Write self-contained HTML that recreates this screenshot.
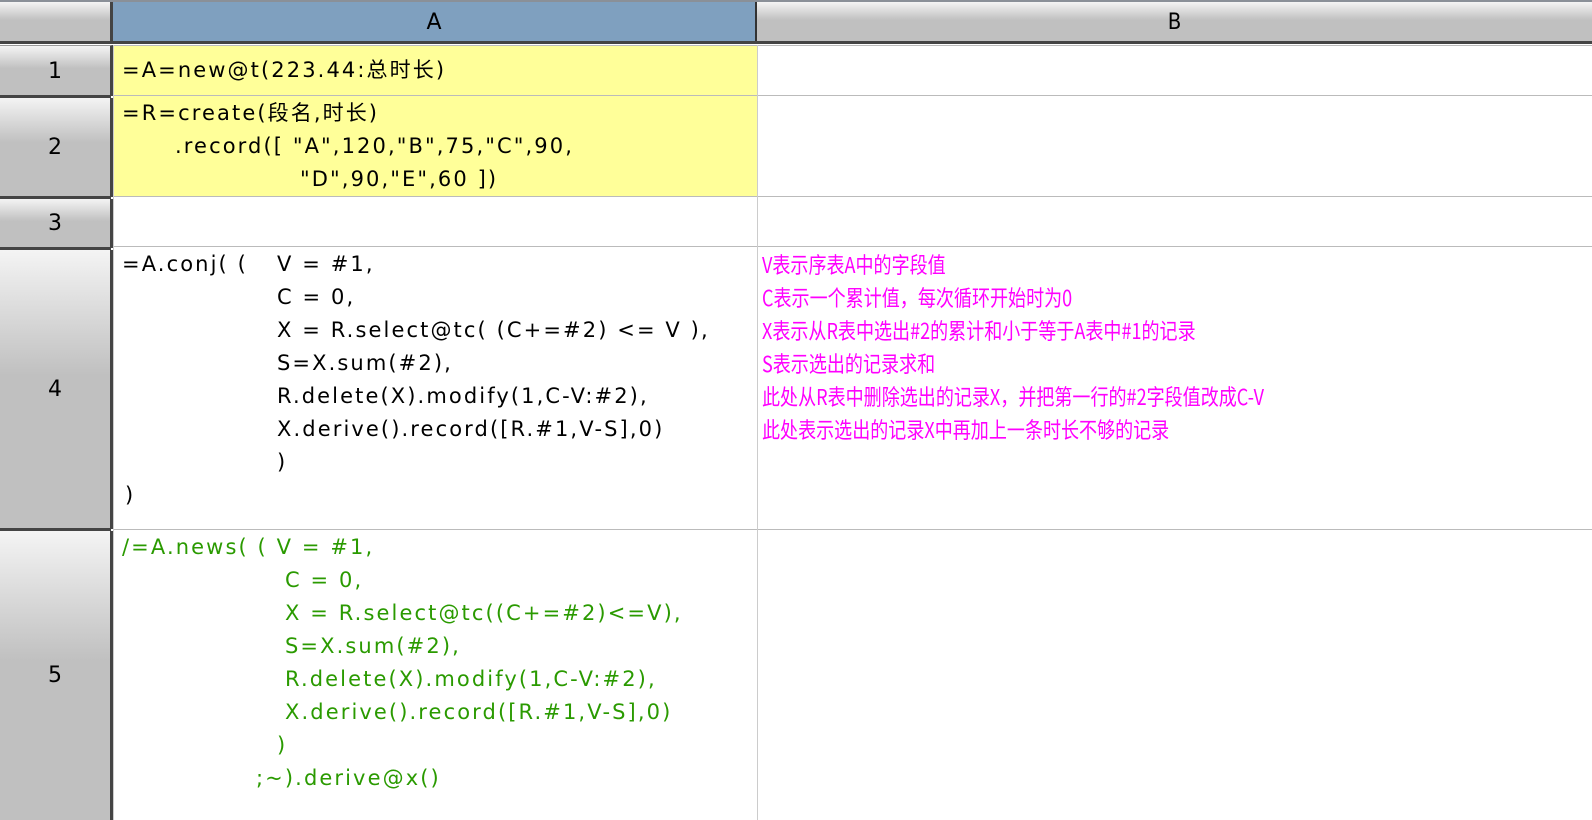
<!DOCTYPE html>
<html><head><meta charset="utf-8"><style>
html,body{margin:0;padding:0;width:1592px;height:820px;overflow:hidden;background:#fff;position:relative;font-family:"Liberation Sans","Noto Sans CJK SC",sans-serif;}
.a{position:absolute;box-sizing:border-box;}
.rh{background:linear-gradient(#f4f4f4,#c0c0c0 45%,#c0c0c0);border-right:3px solid #444;color:#000;font-size:22px;display:flex;align-items:center;justify-content:center;font-family:"DejaVu Sans",sans-serif;}
.hl{background:#444;height:3px;}
.t{position:absolute;font-family:"DejaVu Sans","Noto Sans CJK SC",sans-serif;font-size:21px;letter-spacing:2.1px;white-space:pre;line-height:33px;}
.g{color:#2a9a00}
.m{color:#f0f;font-family:"Noto Sans CJK SC",sans-serif;font-size:22px;letter-spacing:0;transform:scaleX(0.82);transform-origin:left top;}
</style></head><body>
<div class="a" style="left:0;top:0;width:1592px;height:2px;background:#8a9098"></div>
<div class="a rh" style="left:0;top:2px;width:113px;height:40px;border-right:3px solid #444"></div>
<div class="a" style="left:113px;top:2px;width:644px;height:40px;background:#7fa0bf;border-right:2px solid #333;display:flex;align-items:center;justify-content:center;font-size:22px;font-family:'DejaVu Sans',sans-serif">A</div>
<div class="a" style="left:757px;top:2px;width:835px;height:40px;background:linear-gradient(#f4f4f4,#c0c0c0 45%,#c0c0c0);display:flex;align-items:center;justify-content:center;font-size:22px;font-family:'DejaVu Sans Condensed','DejaVu Sans',sans-serif">B</div>
<div class="a hl" style="left:0;top:41px;width:1592px"></div>
<div class="a rh" style="left:0;top:45px;width:113px;height:51px;border-top:1px solid #999">1</div>
<div class="a hl" style="left:0;top:95px;width:111px"></div>
<div class="a rh" style="left:0;top:98px;width:113px;height:99px">2</div>
<div class="a hl" style="left:0;top:196px;width:111px"></div>
<div class="a rh" style="left:0;top:199px;width:113px;height:49px">3</div>
<div class="a hl" style="left:0;top:247px;width:111px"></div>
<div class="a rh" style="left:0;top:250px;width:113px;height:279px">4</div>
<div class="a hl" style="left:0;top:528px;width:111px"></div>
<div class="a rh" style="left:0;top:531px;width:113px;height:289px">5</div>
<div class="a" style="left:114px;top:45px;width:643px;height:151px;background:#ffff99"></div>
<div class="a" style="left:114px;top:95px;width:1478px;height:1px;background:#bbb"></div>
<div class="a" style="left:114px;top:45px;width:1478px;height:1px;background:#bbb"></div>
<div class="a" style="left:114px;top:196px;width:1478px;height:1px;background:#bbb"></div>
<div class="a" style="left:114px;top:246px;width:1478px;height:1px;background:#bbb"></div>
<div class="a" style="left:114px;top:529px;width:1478px;height:1px;background:#bbb"></div>
<div class="a" style="left:757px;top:45px;width:1px;height:775px;background:#ccc"></div>
<div class="a" style="left:113px;top:45px;width:1px;height:775px;background:#ccc"></div>
<div class="t" style="left:122px;top:54px">=A=new@t(223.44:总时长)</div>
<div class="t" style="left:122px;top:97px">=R=create(段名,时长)</div>
<div class="t" style="left:175px;top:130px">.record([ "A",120,"B",75,"C",90,</div>
<div class="t" style="left:300px;top:163px">"D",90,"E",60 ])</div>
<div class="t" style="left:122px;top:248px">=A.conj( (</div>
<div class="t" style="left:277px;top:248px">V = #1,
C = 0,
X = R.select@tc( (C+=#2) &lt;= V ),
S=X.sum(#2),
R.delete(X).modify(1,C-V:#2),
X.derive().record([R.#1,V-S],0)
)</div>
<div class="t" style="left:125px;top:479px">)</div>
<div class="t m" style="left:762px;top:248px">V表示序表A中的字段值
C表示一个累计值，每次循环开始时为0
X表示从R表中选出#2的累计和小于等于A表中#1的记录
S表示选出的记录求和
此处从R表中删除选出的记录X，并把第一行的#2字段值改成C-V
此处表示选出的记录X中再加上一条时长不够的记录</div>
<div class="t g" style="left:122px;top:531px">/=A.news( ( V = #1,</div>
<div class="t g" style="left:285px;top:564px">C = 0,
X = R.select@tc((C+=#2)&lt;=V),
S=X.sum(#2),
R.delete(X).modify(1,C-V:#2),
X.derive().record([R.#1,V-S],0)</div>
<div class="t g" style="left:277px;top:729px">)</div>
<div class="t g" style="left:256px;top:762px">;~).derive@x()</div>
</body></html>
